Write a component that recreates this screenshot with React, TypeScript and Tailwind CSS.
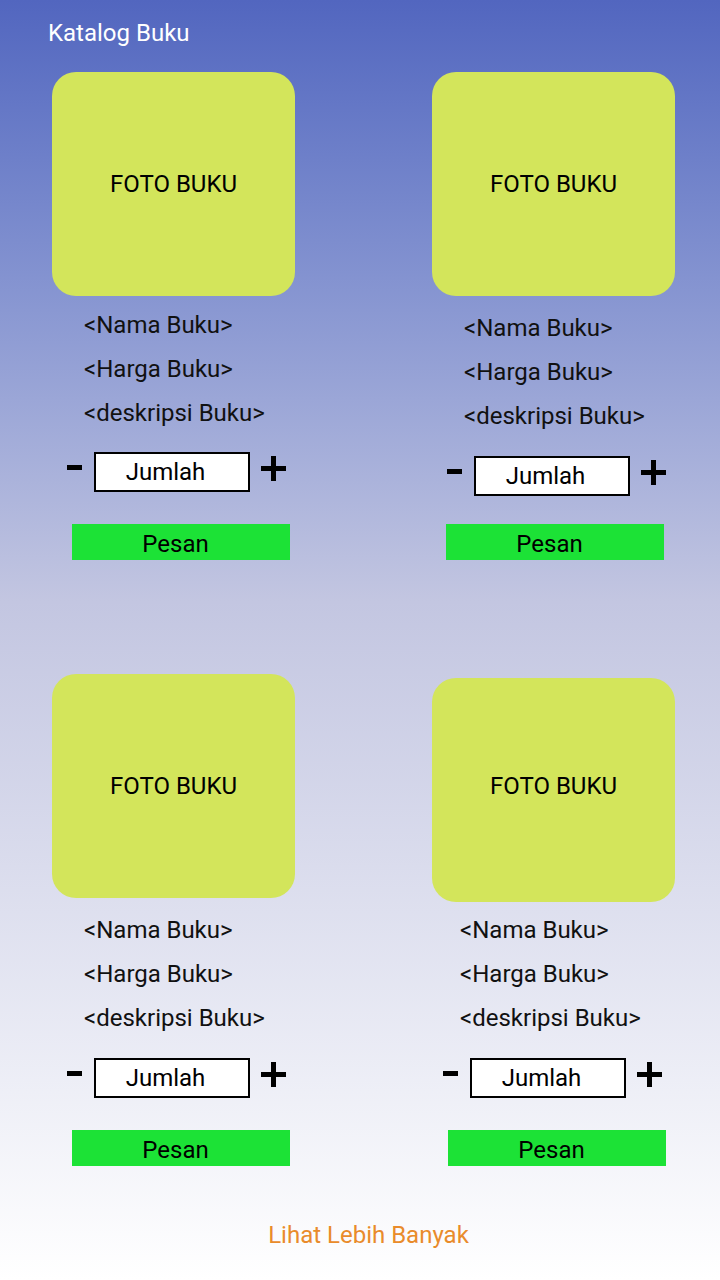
import React from "react";

type CardProps = {
  imgMt?: string;
  imgPb?: string;
  textPl: string;
  textMt: string;
  qtyMt: string;
  qtyPl: string;
  pesanMt: string;
  pesanPl: string;
};

function Card({ imgMt = "", imgPb = "", textPl, textMt, qtyMt, qtyPl, pesanMt, pesanPl }: CardProps) {
  return (
    <div className="flex w-[243px] flex-col">
      <div className={`flex h-[224px] w-[243px] items-center justify-center rounded-[24px] bg-[#d3e55b] text-[24px] text-black ${imgMt} ${imgPb}`}>
        FOTO BUKU
      </div>
      <div className={`flex flex-col text-[24px] leading-[44px] text-[#111] ${textPl} ${textMt}`}>
        <span>&lt;Nama Buku&gt;</span>
        <span>&lt;Harga Buku&gt;</span>
        <span>&lt;deskripsi Buku&gt;</span>
      </div>
      <div className={`flex h-[40px] items-center ${qtyPl} ${qtyMt}`}>
        <div className="mt-[-10px] h-[5px] w-[15px] bg-black" />
        <div className="ml-[12px] flex h-[40px] w-[156px] items-center justify-center border-2 border-black bg-white pr-[13px] text-[24px] text-black">
          Jumlah
        </div>
        <div className="relative ml-[11px] mt-[-8px] h-[25px] w-[25px]">
          <div className="absolute left-0 top-[10px] h-[5px] w-[25px] bg-black" />
          <div className="absolute left-[10px] top-0 h-[25px] w-[5px] bg-black" />
        </div>
      </div>
      <div className={`${pesanPl} ${pesanMt}`}>
        <div className="flex h-[36px] w-[218px] items-center justify-center bg-[#1ce236] pr-[11px] pt-[3px] text-[24px] text-black">
          Pesan
        </div>
      </div>
    </div>
  );
}

export default function App() {
  return (
    <div
      className="flex h-[1280px] w-[720px] flex-col bg-gradient-to-b from-[#5266bf] via-[#c3c6e1] via-[47%] to-white"
      style={{ fontFamily: "Roboto, 'Noto Sans', sans-serif" }}
    >
      <div className="h-[72px] pl-[48px] pt-[21px] text-[24px] leading-[24px] text-white">Katalog Buku</div>
      <div className="grid grid-cols-[243px_243px] items-start gap-x-[137px] gap-y-[114px] pl-[52px]">
        <Card textPl="pl-[32px]" textMt="mt-[7px]" qtyMt="mt-[17px]" qtyPl="pl-[15px]" pesanMt="mt-[32px]" pesanPl="pl-[20px]" />
        <Card textPl="pl-[32px]" textMt="mt-[10px]" qtyMt="mt-[18px]" qtyPl="pl-[15px]" pesanMt="mt-[28px]" pesanPl="pl-[14px]" />
        <Card textPl="pl-[32px]" textMt="mt-[10px]" qtyMt="mt-[18px]" qtyPl="pl-[15px]" pesanMt="mt-[32px]" pesanPl="pl-[20px]" />
        <Card imgMt="mt-[4px]" imgPb="pb-[8px]" textPl="pl-[28px]" textMt="mt-[6px]" qtyMt="mt-[18px]" qtyPl="pl-[11px]" pesanMt="mt-[32px]" pesanPl="pl-[16px]" />
      </div>
      <div className="mt-[53px] flex justify-center pl-[17px] text-[24px] leading-[32px] text-[#e98b2b]">Lihat Lebih Banyak</div>
    </div>
  );
}
